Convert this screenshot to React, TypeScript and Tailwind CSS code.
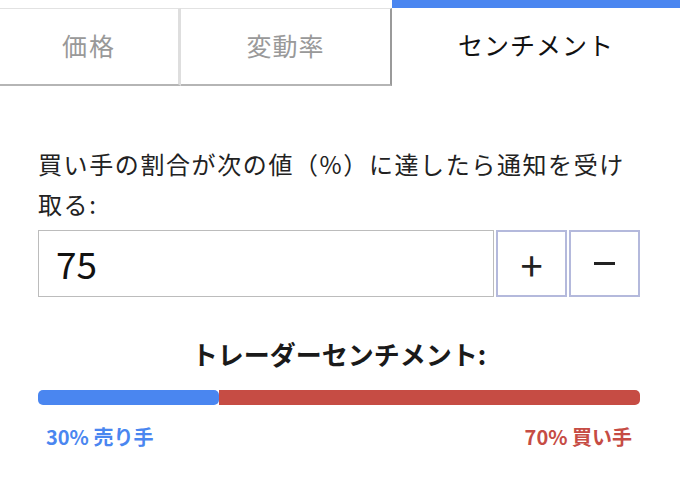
import { useState } from 'react'

const font = { fontFamily: '"Noto Sans CJK JP", "Noto Sans", sans-serif' }

export default function App() {
  const [value, setValue] = useState(75)
  const sell = 30
  const buy = 70

  return (
    <div className="w-[680px] h-[477px] bg-white overflow-hidden" style={font}>
      <div className="flex items-end h-[86px]">
        <div className="w-[181px] h-[78px] flex items-center justify-center pb-[2px] border-t border-t-[#e2e2e2] border-r-[3px] border-r-[#dedede] border-b-2 border-b-[#b5b5b5] text-[25px] text-[#999] tracking-[2px]">
          価格
        </div>
        <div className="w-[211px] h-[78px] flex items-center justify-center pb-[2px] border-t border-t-[#e2e2e2] border-r-2 border-r-[#9a9a9a] border-b-2 border-b-[#b5b5b5] text-[25px] text-[#999] tracking-[1px]">
          変動率
        </div>
        <div className="flex-1 h-[86px] flex items-center justify-center pb-[4px] border-t-[8px] border-t-[#4a86f0] text-[25px] text-[#111] tracking-[1px]">
          センチメント
        </div>
      </div>

      <div className="pl-[38px] pr-[40px] pt-[58px]">
        <p className="text-[24px] leading-[40px] text-[#222] tracking-[1.6px] whitespace-nowrap">
          買い手の割合が次の値（%）に達したら通知を受け
          <br />
          取る:
        </p>
        <div className="flex gap-[2px] mt-[6px] h-[67px]">
          <div className="flex-1 border border-[#bcbcbc] flex items-center px-[17px] text-[37px] text-[#111]">
            {value}
          </div>
          <button
            onClick={() => setValue(value + 1)}
            className="w-[71px] border-2 border-[#b4b9dc] flex items-center justify-center text-[40px] leading-none text-[#222]"
          >
            +
          </button>
          <button
            onClick={() => setValue(value - 1)}
            className="w-[71px] border-2 border-[#b4b9dc] flex items-center justify-center text-[#222]"
            aria-label="−"
          >
            <span className="block w-[21px] h-[3px] bg-[#222]" />
          </button>
        </div>

        <h2 className="mt-[42px] text-center text-[26px] font-bold text-[#1a1a1a] leading-[30px]">
          トレーダーセンチメント:
        </h2>
        <div className="mt-[21px] h-[15px] flex rounded-[5px] overflow-hidden">
          <div className="bg-[#4a86f0] rounded-r-[5px]" style={{ width: `${sell}%` }} />
          <div className="flex-1 bg-[#c64c44]" />
        </div>
        <div className="flex justify-between px-[8px] mt-[17px] text-[20px] font-bold leading-[30px]">
          <span className="text-[#4a86f0]">{sell}% 売り手</span>
          <span className="text-[#c64c44]">{buy}% 買い手</span>
        </div>
      </div>
    </div>
  )
}
